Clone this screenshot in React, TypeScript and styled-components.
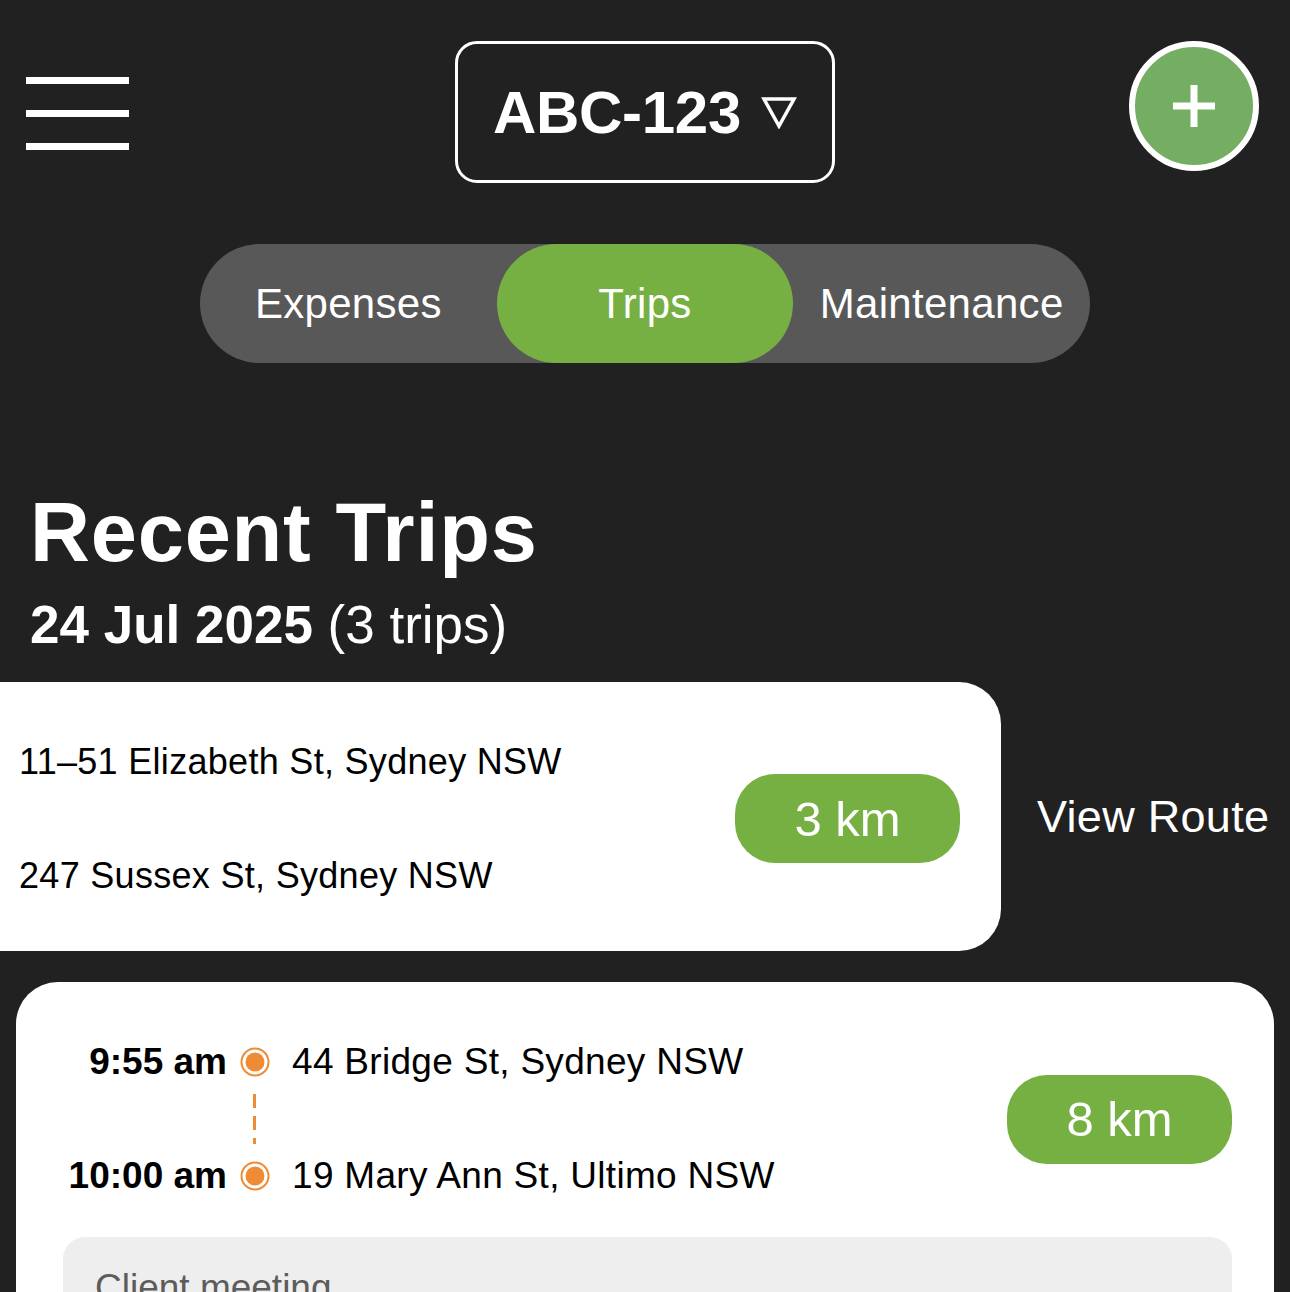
import React from "react";
import styled, { createGlobalStyle } from "styled-components";

const Global = createGlobalStyle`
  html, body { margin: 0; padding: 0; background: #212121; }
  body { font-family: "Liberation Sans", Arial, sans-serif; overflow: hidden; }
  * { box-sizing: border-box; }
`;

const GREEN = "#77b042";
const ORANGE = "#ef8b34";

const Page = styled.div`
  width: 1290px;
  height: 1292px;
  background: #212121;
  overflow: hidden;
  display: flex;
  flex-direction: column;
  & > * {
    flex-shrink: 0;
  }
`;

const Header = styled.header`
  display: grid;
  grid-template-columns: 1fr auto 1fr;
  align-items: start;
  padding: 41px 31px 0 31px;
`;

const Hamburger = styled.button`
  justify-self: start;
  margin: 36px 0 0 -5px;
  width: 103px;
  display: flex;
  flex-direction: column;
  gap: 26px;
  padding: 0;
  border: 0;
  background: none;
  span {
    display: block;
    height: 7px;
    background: #fff;
  }
`;

const PlateSelect = styled.button`
  width: 380px;
  height: 142px;
  border: 3px solid #fff;
  border-radius: 22px;
  background: transparent;
  color: #fff;
  display: flex;
  align-items: center;
  justify-content: center;
  gap: 20px;
  padding: 0;
  font-family: "Liberation Sans", Arial, sans-serif;
  font-weight: 700;
  font-size: 60px;
  letter-spacing: -0.3px;
`;

const AddButton = styled.button`
  justify-self: end;
  width: 130px;
  height: 130px;
  border-radius: 50%;
  border: 6px solid #fff;
  background: #74ae62;
  display: flex;
  align-items: center;
  justify-content: center;
  padding: 0;
`;

const Tabs = styled.nav`
  align-self: center;
  margin-top: 61px;
  width: 890px;
  height: 119px;
  border-radius: 60px;
  background: #585858;
  display: grid;
  grid-template-columns: repeat(3, 1fr);
`;

const Tab = styled.div<{ $active?: boolean }>`
  display: flex;
  align-items: center;
  justify-content: center;
  border-radius: 60px;
  background: ${(p) => (p.$active ? GREEN : "transparent")};
  color: #fff;
  font-size: 42px;
  letter-spacing: 0.3px;
`;

const Heading = styled.h1`
  margin: 128px 0 0 30px;
  font-size: 83px;
  line-height: 83px;
  font-weight: 700;
  color: #fff;
  letter-spacing: 0.8px;
`;

const DateLine = styled.h2`
  margin: 24px 0 0 30px;
  font-size: 53px;
  line-height: 53px;
  font-weight: 700;
  color: #fff;
  span {
    font-weight: 400;
  }
`;

const SwipeRow = styled.div`
  margin-top: 31px;
  display: flex;
  align-items: center;
  gap: 36px;
`;

const Card = styled.div`
  background: #fff;
  border-radius: 42px;
`;

const SwipedCard = styled(Card)`
  margin-left: -40px;
  width: 1041px;
  height: 269px;
  padding: 4px 41px 0 59px;
  display: flex;
  align-items: center;
  justify-content: space-between;
  flex-shrink: 0;
`;

const AddressStack = styled.div`
  display: flex;
  flex-direction: column;
  gap: 70px;
`;

const Address = styled.div`
  font-size: 36px;
  line-height: 44px;
  color: #000;
  letter-spacing: 0.3px;
  white-space: nowrap;
`;

const Distance = styled.div`
  width: 225px;
  height: 89px;
  border-radius: 40px;
  background: ${GREEN};
  color: #fff;
  font-size: 49px;
  display: flex;
  align-items: center;
  justify-content: center;
  flex-shrink: 0;
`;

const ViewRoute = styled.div`
  color: #fff;
  font-size: 45px;
  letter-spacing: 0.3px;
  white-space: nowrap;
`;

const TripCard = styled(Card)`
  margin: 31px 16px 0;
  padding: 58px 42px 0 47px;
  height: 400px;
  border-bottom-left-radius: 0;
  border-bottom-right-radius: 0;
`;

const TripTop = styled.div`
  display: flex;
  align-items: center;
  justify-content: space-between;
`;

const Timeline = styled.div`
  display: flex;
  flex-direction: column;
`;

const Stop = styled.div`
  display: flex;
  align-items: center;
  height: 44px;
`;

const Time = styled.div`
  width: 164px;
  text-align: right;
  font-weight: 700;
  font-size: 37px;
  color: #000;
  white-space: nowrap;
`;

const DotWrap = styled.div`
  width: 30px;
  height: 30px;
  margin: 0 22px 0 13px;
  flex-shrink: 0;
  display: flex;
`;

const Connector = styled.div`
  height: 70px;
  margin-left: 190px;
  padding: 10px 0;
  display: flex;
  div {
    width: 3px;
    height: 100%;
    background: repeating-linear-gradient(
      to bottom,
      ${ORANGE} 0 14px,
      transparent 14px 22px
    );
  }
`;

const StopAddress = styled(Address)`
  font-size: 37px;
`;

const Note = styled.div`
  margin-top: 39px;
  height: 140px;
  border-radius: 22px;
  background: #eeeeee;
  padding: 30px 32px;
  font-size: 37px;
  color: #5c5c5c;
`;

const Dot = () => (
  <DotWrap>
    <svg width="30" height="30" viewBox="0 0 30 30">
      <circle cx="15" cy="15" r="13.5" fill="none" stroke={ORANGE} strokeWidth="2" />
      <circle cx="15" cy="15" r="9.5" fill={ORANGE} />
    </svg>
  </DotWrap>
);

export default function App() {
  return (
    <>
      <Global />
      <Page>
        <Header>
          <Hamburger aria-label="Menu">
            <span />
            <span />
            <span />
          </Hamburger>
          <PlateSelect>
            ABC-123
            <svg width="36" height="33" viewBox="0 0 36 33">
              <path
                d="M3 3 H33 L18 30 Z"
                fill="none"
                stroke="#fff"
                strokeWidth="3.5"
                strokeLinejoin="miter"
              />
            </svg>
          </PlateSelect>
          <AddButton aria-label="Add">
            <svg width="44" height="44" viewBox="0 0 44 44">
              <path d="M22 1 V43 M1 22 H43" stroke="#fff" strokeWidth="7" />
            </svg>
          </AddButton>
        </Header>

        <Tabs>
          <Tab>Expenses</Tab>
          <Tab $active>Trips</Tab>
          <Tab>Maintenance</Tab>
        </Tabs>

        <Heading>Recent Trips</Heading>
        <DateLine>
          24 Jul 2025 <span>(3 trips)</span>
        </DateLine>

        <SwipeRow>
          <SwipedCard>
            <AddressStack>
              <Address>11–51 Elizabeth St, Sydney NSW</Address>
              <Address>247 Sussex St, Sydney NSW</Address>
            </AddressStack>
            <Distance>3 km</Distance>
          </SwipedCard>
          <ViewRoute>View Route</ViewRoute>
        </SwipeRow>

        <TripCard>
          <TripTop>
            <Timeline>
              <Stop>
                <Time>9:55 am</Time>
                <Dot />
                <StopAddress>44 Bridge St, Sydney NSW</StopAddress>
              </Stop>
              <Connector>
                <div />
              </Connector>
              <Stop>
                <Time>10:00 am</Time>
                <Dot />
                <StopAddress>19 Mary Ann St, Ultimo NSW</StopAddress>
              </Stop>
            </Timeline>
            <Distance>8 km</Distance>
          </TripTop>
          <Note>Client meeting</Note>
        </TripCard>
      </Page>
    </>
  );
}
